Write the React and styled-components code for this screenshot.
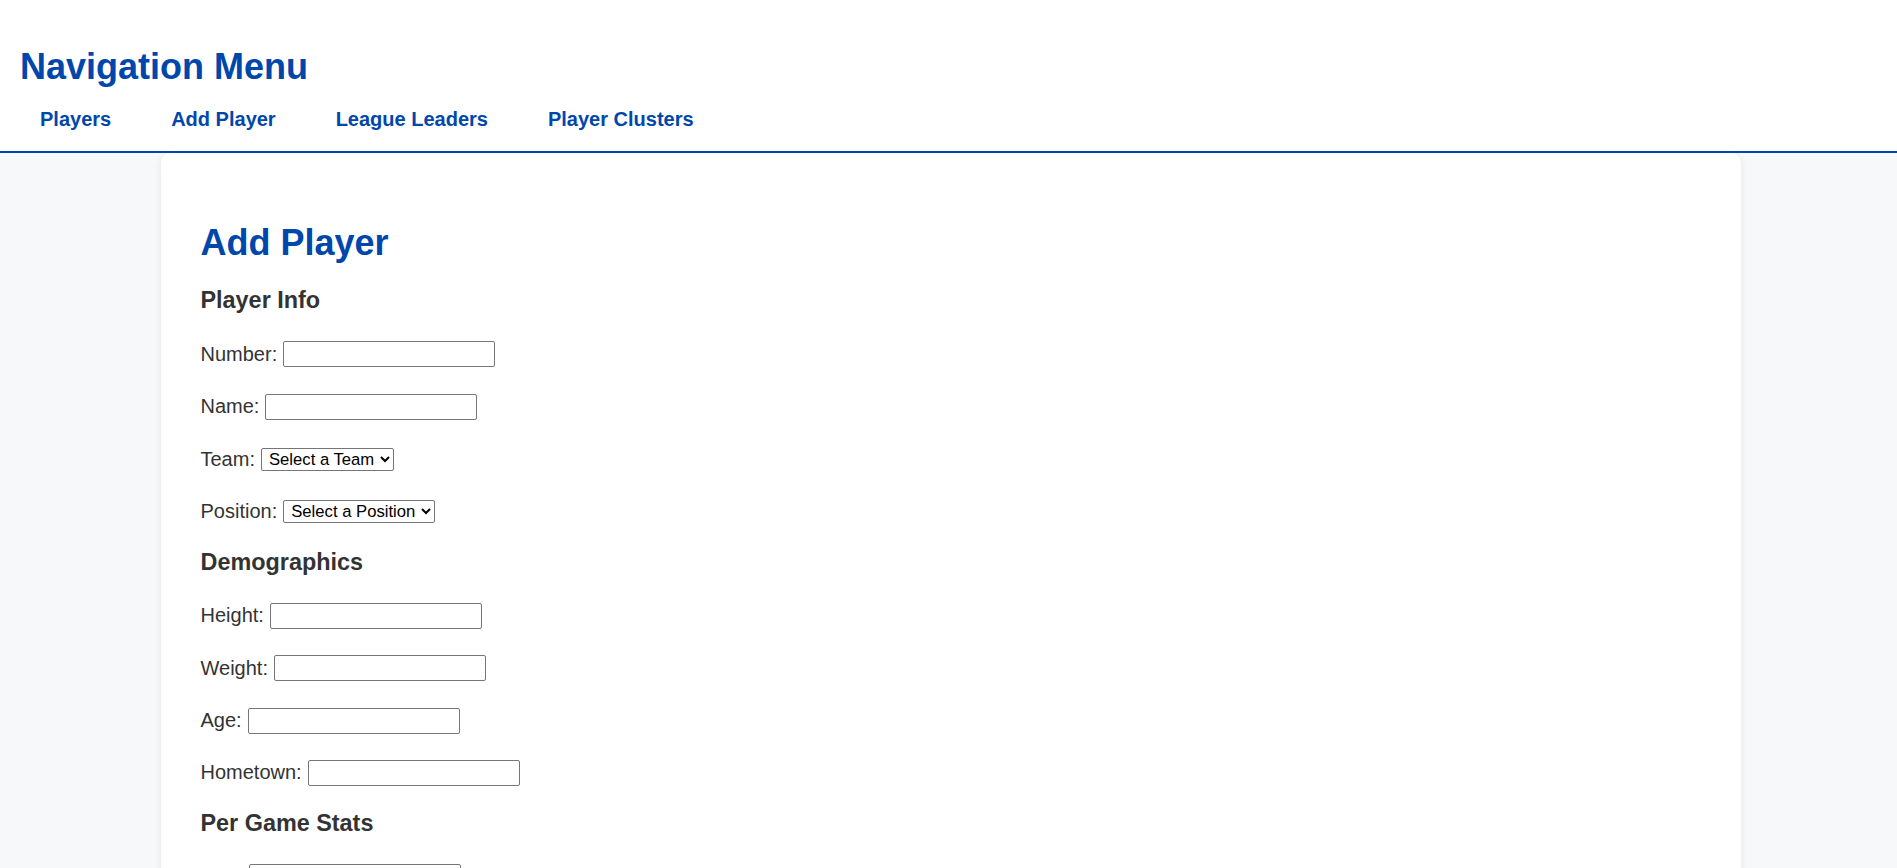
import React from 'react';
import styled, { createGlobalStyle } from 'styled-components';

const GlobalStyle = createGlobalStyle`
  html, body {
    margin: 0;
    padding: 0;
    background: #f7f8fa;
    font-family: "Liberation Sans", Arial, sans-serif;
  }
`;

const Header = styled.header`
  background: #ffffff;
  padding: 45px 20px 10px;
  border-bottom: 2px solid #0047ab;
`;

const SiteTitle = styled.h1`
  margin: 0 0 10px;
  font-size: 36px;
  line-height: 43px;
  font-weight: 700;
  color: #0047ab;
`;

const NavList = styled.nav`
  display: flex;
  gap: 20px;
`;

const NavLink = styled.a`
  padding: 10px 20px;
  font-size: 20px;
  line-height: 23px;
  font-weight: 700;
  color: #0047ab;
  text-decoration: none;
  cursor: pointer;
`;

const Main = styled.main`
  padding-left: 4px;
`;

const Card = styled.section`
  max-width: 1580px;
  margin: 0 auto;
  min-height: 760px;
  box-sizing: border-box;
  padding: 40px 40px;
  background: #ffffff;
  border-radius: 10px;
  box-shadow: 0 2px 8px rgba(0, 0, 0, 0.08);
`;

const PageTitle = styled.h2`
  margin: 28px 0 12px;
  font-size: 36px;
  line-height: 43px;
  font-weight: 700;
  color: #0047ab;
`;

const SectionTitle = styled.h3`
  margin: 0;
  height: 52.3px;
  padding-bottom: 3px;
  box-sizing: border-box;
  display: flex;
  align-items: center;
  font-size: 23.4px;
  font-weight: 700;
  color: #333333;
`;

const FieldRow = styled.div`
  height: 52.3px;
  display: flex;
  align-items: center;
  gap: 6px;
  font-size: 20px;
  color: #333333;
`;

const TextInput = styled.input`
  box-sizing: border-box;
  width: 212px;
  height: 26px;
  padding: 1px 3px;
  border: 1px solid #767676;
  border-radius: 2px;
  font-family: "Liberation Sans", Arial, sans-serif;
  font-size: 16.67px;
  background: #ffffff;
`;

const Select = styled.select`
  box-sizing: border-box;
  height: 23px;
  padding: 0 2px 0 3px;
  border: 1px solid #767676;
  border-radius: 2px;
  font-family: "Liberation Sans", Arial, sans-serif;
  font-size: 16.67px;
  color: #000000;
  background: #ffffff;
`;

const navItems = ['Players', 'Add Player', 'League Leaders', 'Player Clusters'];

const sections = [
  {
    title: 'Player Info',
    fields: [
      { label: 'Number', type: 'text' },
      { label: 'Name', type: 'text' },
      { label: 'Team', type: 'select', placeholder: 'Select a Team' },
      { label: 'Position', type: 'select', placeholder: 'Select a Position' },
    ],
  },
  {
    title: 'Demographics',
    fields: [
      { label: 'Height', type: 'text' },
      { label: 'Weight', type: 'text' },
      { label: 'Age', type: 'text' },
      { label: 'Hometown', type: 'text' },
    ],
  },
  {
    title: 'Per Game Stats',
    fields: [
      { label: 'Reb', type: 'text' },
      { label: 'Ast', type: 'text' },
    ],
  },
];

const Field = ({ field }) => (
  <FieldRow as="label">
    <span>{field.label}:</span>
    {field.type === 'select' ? (
      <Select defaultValue="">
        <option value="">{field.placeholder}</option>
      </Select>
    ) : (
      <TextInput type="text" />
    )}
  </FieldRow>
);

const App = () => (
  <>
    <GlobalStyle />
    <Header>
      <SiteTitle>Navigation Menu</SiteTitle>
      <NavList>
        {navItems.map(item => (
          <NavLink key={item}>{item}</NavLink>
        ))}
      </NavList>
    </Header>
    <Main>
      <Card>
        <PageTitle>Add Player</PageTitle>
        <form>
          {sections.map(section => (
            <div key={section.title}>
              <SectionTitle>{section.title}</SectionTitle>
              {section.fields.map(field => (
                <Field key={field.label} field={field} />
              ))}
            </div>
          ))}
        </form>
      </Card>
    </Main>
  </>
);

export default App;
